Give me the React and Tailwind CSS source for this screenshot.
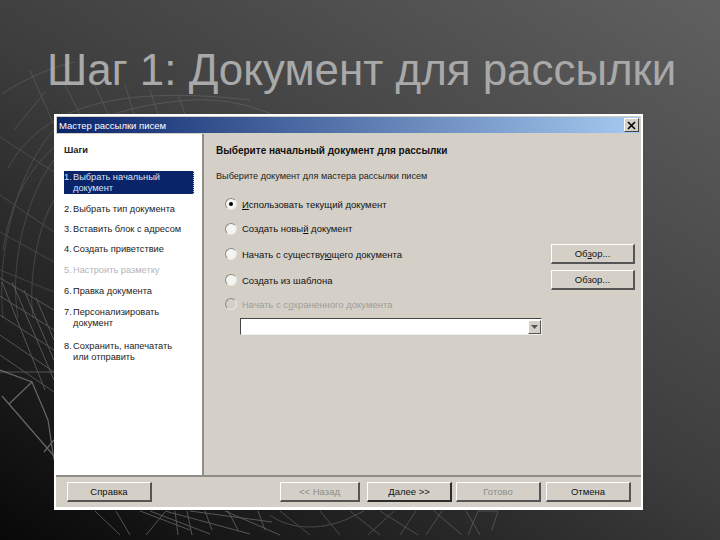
function Globe() {
  return (
    <svg className="absolute inset-0" width="720" height="540" viewBox="0 0 720 540" fill="none" stroke="#8a8a8a" strokeWidth="1">
      <g opacity="0.3">
        <path d="M2 94 C 30 75, 60 65, 75 62" />
        <path d="M8 168 C 40 110, 110 84, 250 100" />
        <path d="M3 250 C 15 170, 60 110, 190 100 C 230 98, 260 108, 290 122" />
        <path d="M3 318 C -5 240, 25 160, 54 130" />
        <path d="M18 318 C 8 260, 30 190, 54 160" />
        <path d="M33 318 C 28 280, 38 225, 54 200" />
        <path d="M30 70 L54 125" />
        <path d="M14 130 L45 92" />
        <path d="M0 137 L54 172" />
        <path d="M0 195 L54 232" />
        <path d="M0 232 L54 262" />
        <path d="M0 270 L54 292" />
        <path d="M65 85 L80 114" />
        <path d="M95 85 L108 114" />
        <path d="M125 85 L134 114" />
        <path d="M150 90 L158 114" />
        <path d="M178 95 L185 114" />
      </g>
      <g opacity="0.5">
        <path d="M0 278 L54 310" />
        <path d="M0 296 L54 330" />
        <path d="M0 315 L54 350" />
        <path d="M0 335 L54 372" />
        <path d="M0 355 L54 392" />
        <path d="M2 282 L45 390" />
        <path d="M12 282 L54 380" />
        <path d="M24 290 L54 360" />
        <path d="M36 298 L54 340" />
        <path d="M0 372 L54 372" />
      </g>
      <g opacity="0.7" strokeWidth="1.2">
        <path d="M0 370 L32 382 L48 420 L54 460" />
        <path d="M2 396 L54 456" />
        <path d="M9 404 L32 382" />
        <path d="M44 452 L54 440" />
      </g>
      <g opacity="0.55">
        <path d="M95 511 L120 535" />
        <path d="M116 511 L130 535" />
        <path d="M146 535 L165 512" />
        <path d="M140 511 L190 530" />
        <path d="M150 511 L210 534" />
        <path d="M165 511 L250 534" />
        <path d="M190 511 L272 522" />
        <path d="M225 511 L280 535" />
        <path d="M175 511 L178 535" />
        <path d="M187 511 L192 535" />
        <path d="M205 511 L212 530" />
        <path d="M228 511 L238 530" />
        <path d="M258 511 L265 530" />
      </g>
      <g opacity="0.4">
        <path d="M270 515 C 290 530, 320 530, 345 520 L 364 511" />
        <path d="M280 511 L310 535" />
        <path d="M320 511 L340 535" />
        <path d="M350 511 L380 535" />
        <path d="M368 535 L394 511" />
        <path d="M380 511 L418 535" />
        <path d="M400 535 L416 511" />
        <path d="M426 535 L442 511" />
        <path d="M434 511 L462 535" />
        <path d="M466 511 L480 535" />
        <path d="M478 511 L497 511" />
        <path d="M478 511 L468 535" />
        <path d="M498 511 L492 530" />
      </g>
    </svg>
  );
}

function Radio({ checked, disabled }) {
  return (
    <span className={`relative h-[12px] w-[12px] shrink-0 rounded-full border border-t-[#8e8a80] border-l-[#8e8a80] border-r-[#e8e6df] border-b-[#e8e6df] ${disabled ? "bg-[#d4d0c8]" : "bg-[#f4f4f0]"}`}>
      {checked && <span className="absolute left-[3px] top-[3px] h-[4px] w-[4px] rounded-full bg-black" />}
    </span>
  );
}

function Option({ children, checked, disabled, h }) {
  return (
    <div className={`flex items-center ${h} ${disabled ? "text-[#a09d95]" : "text-[#111]"}`}>
      <Radio checked={checked} disabled={disabled} />
      <span className="ml-[5px]">{children}</span>
    </div>
  );
}

function Button({ children, disabled, strong, w = "w-[85px]", h = "h-[20px]" }) {
  return (
    <div className={`flex ${w} ${h} shrink-0 items-center justify-center border border-t-white border-l-white bg-[#d4d0c8] ${strong ? "border-r-[#2c2c2c] border-b-[#2c2c2c] border-t-[#444] border-l-[#555] border-r-2 border-b-2" : "border-r-[#555] border-b-[#555] border-r-2 border-b-2"} ${disabled ? "text-[#8f8c85]" : "text-[#111]"}`}>
      {children}
    </div>
  );
}

function Step({ n, children, cont, muted, h, selected }) {
  return (
    <div className={`flex flex-col justify-center ${h} ${selected ? "w-[130px] bg-[#0a246a] text-[#dfe3ee] border-r border-dotted border-[#c9cde0]" : muted ? "text-[#b5b5b5]" : "text-[#1c1c1c]"}`}>
      <div className="flex"><span className="w-[9px] shrink-0">{n}.</span><span>{children}</span></div>
      {cont && <div className="pl-[9px]">{cont}</div>}
    </div>
  );
}

export default function App() {
  return (
    <div className="relative h-[540px] w-[720px] overflow-hidden bg-[linear-gradient(212deg,#606060_0%,#3d3d3d_50%,#080808_100%)] [font-family:'Liberation_Sans',Arial,sans-serif]">
      <Globe />
      <div className="relative flex h-full flex-col pl-[54px]">
        <h1 className="ml-[-7px] mt-[45px] h-[69px] text-[43.9px] leading-[50px] whitespace-nowrap text-[#a9a9a9]">Шаг 1: Документ для рассылки</h1>
        <div className="flex h-[396px] w-[589px] flex-col border-2 border-white border-b-[3px] bg-[#d4d0c8] text-[9.5px] leading-[11px]">
          <div className="flex h-[18px] shrink-0 items-center justify-between border border-[#d4d0c8] bg-[linear-gradient(90deg,#0a246a,#a6caf0)] pl-[2px] pr-[1px] text-[9.5px] text-white">
            <span>Мастер рассылки писем</span>
            <span className="flex h-[14px] w-[15px] items-center justify-center border border-t-white border-l-white border-r-[#444] border-b-[#444] bg-[#d4d0c8]">
              <svg width="9" height="9" viewBox="0 0 9 9" stroke="#000" strokeWidth="1.6"><path d="M1 1L8 8M8 1L1 8" /></svg>
            </span>
          </div>
          <div className="flex min-h-0 flex-1">
            <div className="flex w-[148px] shrink-0 flex-col border-r-2 border-[#8f8d86] bg-white pl-[8px] pt-[11px] text-[9.25px]">
              <div className="h-[26px] font-bold text-[#222]">Шаги</div>
              <Step n="1" selected cont="документ" h="h-[23px]">Выбрать начальный</Step>
              <div className="h-[5px]" />
              <Step n="2" h="h-[20px]">Выбрать тип документа</Step>
              <Step n="3" h="h-[20px]">Вставить блок с адресом</Step>
              <Step n="4" h="h-[21px]">Создать приветствие</Step>
              <Step n="5" muted h="h-[21px]">Настроить разметку</Step>
              <Step n="6" h="h-[20px]">Правка документа</Step>
              <Step n="7" cont="документ" h="h-[34px]">Персонализировать</Step>
              <Step n="8" cont="или отправить" h="h-[33px]">Сохранить, напечатать</Step>
            </div>
            <div className="flex min-w-0 flex-1 flex-col pl-[12px] pt-[11px]">
              <div className="h-[26px] text-[10px] font-bold text-[#111]">Выберите начальный документ для рассылки</div>
              <div className="h-[21px] text-[9.15px] text-[#222]">Выберите документ для мастера рассылки писем</div>
              <div className="pl-[9px]">
                <Option checked h="h-[24px]"><u>И</u>спользовать текущий документ</Option>
                <Option h="h-[25px]">Создать новы<u>й</u> документ</Option>
                <div className="flex items-center">
                  <div className="flex-1"><Option h="h-[26px]">Начать с существу<u>ю</u>щего документа</Option></div>
                  <Button w="w-[84px]">Об<u>з</u>ор...</Button>
                  <div className="w-[6px]" />
                </div>
                <div className="flex items-center">
                  <div className="flex-1"><Option h="h-[26px]">Создать из шаблона</Option></div>
                  <Button w="w-[84px]">Обзор...</Button>
                  <div className="w-[6px]" />
                </div>
                <Option disabled h="h-[22px]">Начать с с<u>о</u>храненного документа</Option>
                <div className="ml-[15px] mt-[3px] flex h-[17px] w-[302px] border border-t-[#444] border-l-[#444] border-r-[#eee] border-b-[#eee] bg-white p-[1px] pr-0 pb-0">
                  <div className="flex-1" />
                  <div className="flex w-[13px] items-center justify-center border border-t-white border-l-white border-r-[#555] border-b-[#555] bg-[#d4d0c8]">
                    <svg width="7" height="4" viewBox="0 0 7 4" fill="#555"><path d="M0 0H7L3.5 4Z" /></svg>
                  </div>
                </div>
              </div>
            </div>
          </div>
          <div className="flex h-[32px] shrink-0 items-center border-t-2 border-t-[#8f8d86] pl-[11px]">
            <Button>Справка</Button>
            <div className="w-[128px]" />
            <Button disabled w="w-[80px]">&lt;&lt; Назад</Button>
            <div className="w-[7px]" />
            <Button strong>Далее &gt;&gt;</Button>
            <div className="w-[4px]" />
            <Button disabled>Готово</Button>
            <div className="w-[5px]" />
            <Button>Отмена</Button>
          </div>
        </div>
      </div>
    </div>
  );
}
